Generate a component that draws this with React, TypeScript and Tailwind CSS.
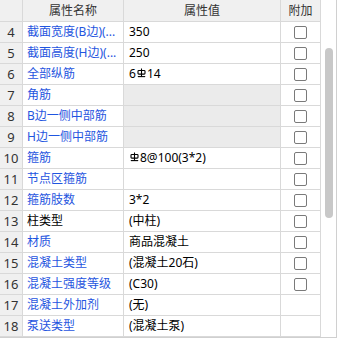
import React from "react";

type Row = {
  no: number;
  name: string;
  value: React.ReactNode;
  blue?: boolean;
  locked?: boolean;
  check?: boolean;
};

// HRB400 rebar mark, drawn since no font carries it
function Rebar() {
  return (
    <svg width="9" height="10" viewBox="0 0 9 10" className="inline-block mb-[3px] mx-[1px]" fill="none" stroke="#000" strokeWidth="1.1">
      <path d="M4.5 0.5V8.6" />
      <rect x="1" y="2.5" width="7" height="3.6" rx="0.8" />
      <path d="M0.8 8.6H8.2" />
    </svg>
  );
}

const rows: Row[] = [
  { no: 4, name: "截面宽度(B边)(...", value: "350", blue: true, check: true },
  { no: 5, name: "截面高度(H边)(...", value: "250", blue: true, check: true },
  { no: 6, name: "全部纵筋", value: <>6<Rebar />14</>, blue: true, check: true },
  { no: 7, name: "角筋", value: "", blue: true, locked: true, check: true },
  { no: 8, name: "B边一侧中部筋", value: "", blue: true, locked: true, check: true },
  { no: 9, name: "H边一侧中部筋", value: "", blue: true, locked: true, check: true },
  { no: 10, name: "箍筋", value: <><Rebar />8@100(3*2)</>, blue: true, check: true },
  { no: 11, name: "节点区箍筋", value: "", blue: true, check: true },
  { no: 12, name: "箍筋肢数", value: "3*2", blue: true, check: true },
  { no: 13, name: "柱类型", value: "(中柱)", check: true },
  { no: 14, name: "材质", value: "商品混凝土", blue: true, check: true },
  { no: 15, name: "混凝土类型", value: "(混凝土20石)", blue: true, check: true },
  { no: 16, name: "混凝土强度等级", value: "(C30)", blue: true, check: true },
  { no: 17, name: "混凝土外加剂", value: "(无)", blue: true },
  { no: 18, name: "泵送类型", value: "(混凝土泵)", blue: true },
];

const cols = "grid grid-cols-[23px_101px_157px_40px]";
const cell = "border-r border-b border-[#d9d9d9] flex items-center overflow-hidden whitespace-nowrap";

export default function App() {
  return (
    <div
      className="w-[337px] h-[338px] flex bg-white border-b border-[#d0d0d0] text-[12px] leading-none overflow-hidden"
      style={{ fontFamily: '"Noto Sans", "Noto Sans CJK SC", sans-serif' }}
    >
      <div className="w-[321px] flex flex-col">
        <div className={`${cols} h-[22px] bg-[#f0f0f0] text-[#333]`}>
          <div className={cell} />
          <div className={`${cell} justify-center`}>属性名称</div>
          <div className={`${cell} justify-center`}>属性值</div>
          <div className={`${cell} justify-center`}>附加</div>
        </div>
        {rows.map((r) => (
          <div key={r.no} className={`${cols} h-[21px]`}>
            <div className={`${cell} justify-center bg-[#f0f0f0] text-[#333] text-[13px]`}>{r.no}</div>
            <div className={`${cell} pl-[4px] ${r.blue ? "text-[#1f55e0]" : "text-black"}`}>{r.name}</div>
            <div className={`${cell} pl-[5px] text-black ${r.locked ? "bg-[#ebebeb]" : ""}`}>{r.value}</div>
            <div className={`${cell} justify-center`}>
              {r.check && <div className="w-[13px] h-[13px] rounded-[2px] border border-[#7a7a7a] bg-white" />}
            </div>
          </div>
        ))}
      </div>
      <div className="w-[16px] border-r border-[#d0d0d0] pt-[48px] pl-[4px]">
        <div className="w-[8px] h-[170px] rounded-full bg-[#c8c8c8]" />
      </div>
    </div>
  );
}
